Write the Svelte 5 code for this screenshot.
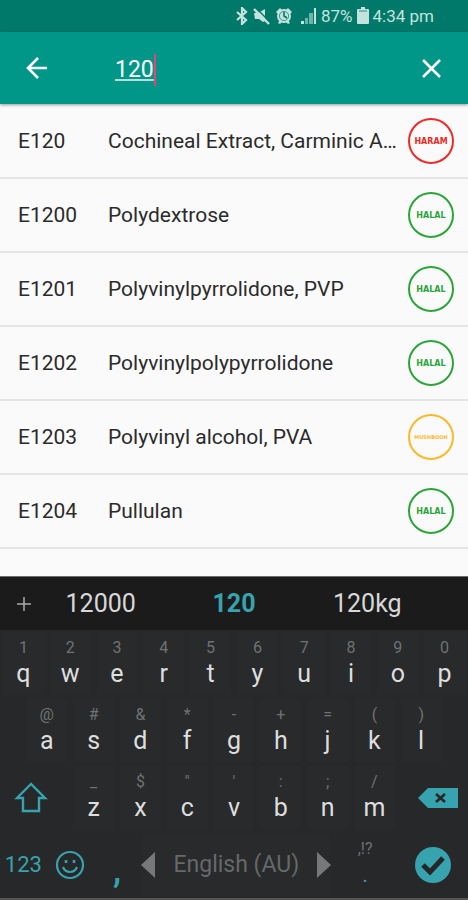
<script lang="ts">
  type Status = 'haram' | 'halal' | 'mushbooh'

  interface Additive {
    code: string
    name: string
    status: Status
  }

  const additives: Additive[] = [
    { code: 'E120', name: 'Cochineal Extract, Carminic Acid', status: 'haram' },
    { code: 'E1200', name: 'Polydextrose', status: 'halal' },
    { code: 'E1201', name: 'Polyvinylpyrrolidone, PVP', status: 'halal' },
    { code: 'E1202', name: 'Polyvinylpolypyrrolidone', status: 'halal' },
    { code: 'E1203', name: 'Polyvinyl alcohol, PVA', status: 'mushbooh' },
    { code: 'E1204', name: 'Pullulan', status: 'halal' },
  ]

  const topKeys = ['q1', 'w2', 'e3', 'r4', 't5', 'y6', 'u7', 'i8', 'o9', 'p0']
  const homeKeys = ['a@', 's#', 'd&', 'f*', 'g-', 'h+', 'j=', 'k(', 'l)']
  const bottomKeys = ['z_', 'x$', 'c"', "v'", 'b:', 'n;', 'm/']

  let query = $state('120')

  let results = $derived(additives.filter((a) => a.code.includes(query)))

  function type(char: string) {
    query += char
  }

  function erase() {
    query = query.slice(0, -1)
  }

  function clear() {
    query = ''
  }
</script>

{#snippet letter(key: string)}
  <button class="key letter" onclick={() => type(key[0])}>
    <span class="hint">{key[1]}</span>
    <span class="char">{key[0]}</span>
  </button>
{/snippet}

<div class="screen">
  <div class="status-bar">
    <svg width="14" height="18" viewBox="0 0 14 18" fill="none" stroke="currentColor" stroke-width="2.2">
      <path d="M2 5l9 8-4 4V1l4 4-9 8" />
    </svg>
    <svg width="18" height="18" viewBox="0 0 18 18">
      <path d="M1 6h4l7-4v12l-2 1-4-3H2z" fill="currentColor" />
      <path d="M3 1l14 14" stroke="#00796b" stroke-width="1.4" />
      <path d="M1 2l15 15" stroke="currentColor" stroke-width="2.4" />
    </svg>
    <svg class="alarm" width="18" height="18" viewBox="0 0 18 18">
      <path d="M1 5l4-4 2 2-4 4zM17 5l-4-4-2 2 4 4zM3 16l2-3 2 2-2 2zM15 16l-2-3-2 2 2 2z" fill="currentColor" />
      <circle cx="9" cy="9" r="7" fill="currentColor" />
      <path d="M9 5v4l3 2" fill="none" stroke="#00796b" stroke-width="1.6" />
      <circle cx="9" cy="9" r="4.6" fill="none" stroke="#00796b" stroke-width="0.7" />
    </svg>
    <svg class="signal" width="17" height="18" viewBox="0 0 17 18" fill="currentColor">
      <path d="M1 14h3v3H1zM14 1h2v16h-2z" />
      <path d="M5 11h3v6H5zM9 6h4v11H9z" opacity="0.55" />
    </svg>
    <span class="percent">87%</span>
    <svg width="12" height="18" viewBox="0 0 12 18" fill="currentColor">
      <path d="M4 0h4v2h3q1 0 1 1v13q0 1-1 1H1q-1 0-1-1V3q0-1 1-1h3z" />
      <path d="M2 4h8" stroke="#00796b" stroke-width="0.8" />
    </svg>
    <span class="time">4:34 pm</span>
  </div>

  <header>
    <button class="icon-button" aria-label="Back">
      <svg width="24" height="24" viewBox="0 0 24 24" fill="none" stroke="currentColor" stroke-width="2.6">
        <path d="M22 12H4M13 2L3 12l10 10" />
      </svg>
    </button>
    <div class="search">
      <input type="text" size="3" aria-label="Search" bind:value={query} />
      <span class="caret"></span>
    </div>
    <button class="icon-button" aria-label="Clear" onclick={clear}>
      <svg width="24" height="24" viewBox="0 0 24 24" fill="none" stroke="currentColor" stroke-width="2.6">
        <path d="M4 4l17 17M21 4L4 21" />
      </svg>
    </button>
  </header>

  <ul class="results">
    {#each results as additive (additive.code)}
      <li>
        <span class="code">{additive.code}</span>
        <span class="name">{additive.name}</span>
        <span class="badge {additive.status}">{additive.status.toUpperCase()}</span>
      </li>
    {/each}
  </ul>

  <div class="suggestions">
    <button class="add" aria-label="Add">
      <svg width="16" height="16" viewBox="0 0 16 16" stroke="currentColor" stroke-width="1.5">
        <path d="M8 1v14M1 8h14" />
      </svg>
    </button>
    <button onclick={() => (query = '12000')}>12000</button>
    <button class="active">120</button>
    <button onclick={() => (query = '120kg')}>120kg</button>
  </div>

  <div class="keyboard">
    <div class="row">
      {#each topKeys as key}
        {@render letter(key)}
      {/each}
    </div>
    <div class="row home">
      {#each homeKeys as key}
        {@render letter(key)}
      {/each}
    </div>
    <div class="row">
      <button class="key wide shift" aria-label="Shift">
        <svg width="34" height="32" viewBox="0 0 34 32" fill="none" stroke="currentColor" stroke-width="2.4">
          <path d="M17 2L3 16h6v13h16V16h6z" />
        </svg>
      </button>
      {#each bottomKeys as key}
        {@render letter(key)}
      {/each}
      <button class="key wide erase" aria-label="Backspace" onclick={erase}>
        <svg width="40" height="20" viewBox="0 0 40 20">
          <path d="M0 10L10 0h30v20H10z" fill="currentColor" />
          <path d="M18 6l9 8M27 6l-9 8" stroke="#252728" stroke-width="2.6" />
        </svg>
      </button>
    </div>
    <div class="row">
      <button class="key small numbers">123</button>
      <button class="key small" aria-label="Emoji">
        <svg width="30" height="30" viewBox="0 0 30 30" fill="none" stroke="currentColor" stroke-width="2.2">
          <circle cx="15" cy="15" r="13" />
          <path d="M8 17q2 5 7 5t7-5" />
          <path d="M11 10v3M19 10v3" stroke-width="2.6" />
        </svg>
      </button>
      <button class="key small comma" onclick={() => type(',')}>,</button>
      <button class="key space" onclick={() => type(' ')}>
        <svg width="14" height="26" viewBox="0 0 14 26" fill="currentColor"><path d="M14 0v26L0 13z" /></svg>
        <span>English (AU)</span>
        <svg width="14" height="26" viewBox="0 0 14 26" fill="currentColor"><path d="M0 0v26l14-13z" /></svg>
      </button>
      <button class="key period" onclick={() => type('.')}>
        <span class="hint">,!?</span>
        <span class="dot">.</span>
      </button>
      <button class="key wide" aria-label="Done">
        <svg width="36" height="36" viewBox="0 0 36 36">
          <circle cx="18" cy="18" r="18" fill="currentColor" />
          <path d="M8 18l7 7 13-14" fill="none" stroke="#252728" stroke-width="5" />
        </svg>
      </button>
    </div>
  </div>
</div>

<style>
  :global(body) {
    margin: 0;
    background: #fafafa;
  }

  .screen {
    display: flex;
    flex-direction: column;
    min-height: 100vh;
    font-family: Roboto, 'Liberation Sans', sans-serif;
    color: #2b2b2b;
  }

  button {
    display: flex;
    align-items: center;
    justify-content: center;
    padding: 0;
    border: none;
    background: none;
    color: inherit;
    font: inherit;
  }

  .status-bar {
    display: flex;
    align-items: center;
    justify-content: flex-end;
    gap: 4px;
    height: 32px;
    padding-right: 34px;
    background: #00796b;
    color: #c4e3de;
    font-size: 17px;
  }

  .status-bar .signal {
    margin-left: 3px;
  }

  header {
    display: flex;
    align-items: center;
    height: 72px;
    background: #009688;
    color: #fff;
    box-shadow: 0 1px 3px rgba(0, 0, 0, 0.4);
    z-index: 1;
  }

  .icon-button {
    width: 74px;
    height: 72px;
  }

  .search {
    display: flex;
    align-items: center;
    flex: 1;
    padding-top: 3px;
    padding-left: 41px;
  }

  .search input {
    field-sizing: content;
    padding: 0;
    border: none;
    outline: none;
    background: none;
    color: inherit;
    font: inherit;
    font-size: 23px;
    line-height: 32px;
    text-decoration: underline 2px #b2dfdb;
    text-underline-offset: 2px;
  }

  .caret {
    width: 2px;
    height: 32px;
    background: #e0457b;
  }

  .results {
    flex: 1;
    margin: 0;
    padding: 1px 0 0;
    list-style: none;
    background: #fafafa;
  }

  .results li {
    display: flex;
    align-items: center;
    box-sizing: border-box;
    height: 74px;
    padding: 0 14px 0 18px;
    border-bottom: 2px solid #e5e5e5;
    font-size: 21px;
  }

  .code {
    width: 90px;
  }

  .name {
    flex: 1;
    min-width: 0;
    margin-right: 8px;
    overflow: hidden;
    text-overflow: ellipsis;
    white-space: nowrap;
  }

  .badge {
    display: flex;
    align-items: center;
    justify-content: center;
    box-sizing: border-box;
    width: 46px;
    height: 46px;
    border: 2px solid currentColor;
    border-radius: 50%;
    font-family: 'DejaVu Sans', sans-serif;
    font-size: 8px;
    font-weight: bold;
  }

  .haram {
    color: #ee2a24;
  }

  .halal {
    color: #2ba53a;
  }

  .mushbooh {
    color: #fbb829;
    font-size: 5px;
  }

  .suggestions {
    display: flex;
    box-sizing: border-box;
    height: 54px;
    border-top: 1px solid #6e6e6e;
    background: #1b1b1c;
    color: #d8d8d8;
    font-size: 25px;
  }

  .suggestions button {
    flex: 1;
  }

  .suggestions .add {
    flex: 0 0 34px;
    box-sizing: border-box;
    justify-content: flex-end;
    padding-right: 2px;
    color: #aaa;
  }

  .suggestions::after {
    content: '';
    width: 34px;
  }

  .suggestions .active {
    color: #36a3ae;
    font-weight: bold;
  }

  .keyboard {
    border-bottom: 2px solid #555;
    background: #27282a;
    color: #36a3ae;
  }

  .row {
    display: flex;
    height: 67px;
  }

  .home {
    padding: 0 5%;
  }

  .key {
    flex: 1;
    box-sizing: border-box;
    min-width: 0;
    padding: 2px 3px;
  }

  .letter,
  .space {
    background: #282a2b content-box;
  }

  .letter,
  .period {
    flex-direction: column;
  }

  .hint {
    height: 20px;
    color: #707273;
    font-size: 16px;
    line-height: 16px;
  }

  .char {
    color: #dedede;
    font-size: 25px;
    line-height: 28px;
  }

  .small {
    flex: 0 0 10%;
  }

  .wide {
    flex: 0 0 15%;
  }

  .erase {
    justify-content: flex-end;
    padding-right: 10px;
  }

  .shift {
    justify-content: flex-start;
    padding-left: 14px;
  }

  .numbers {
    font-size: 22px;
  }

  .comma {
    padding-top: 12px;
    font-size: 36px;
    font-weight: 500;
  }

  .space {
    gap: 18px;
    color: #666869;
    font-size: 23px;
    white-space: nowrap;
  }

  .space svg {
    flex: none;
    color: #777979;
  }

  .period {
    flex: 0 0 14%;
  }

  .dot {
    font-size: 20px;
    line-height: 28px;
  }
</style>
